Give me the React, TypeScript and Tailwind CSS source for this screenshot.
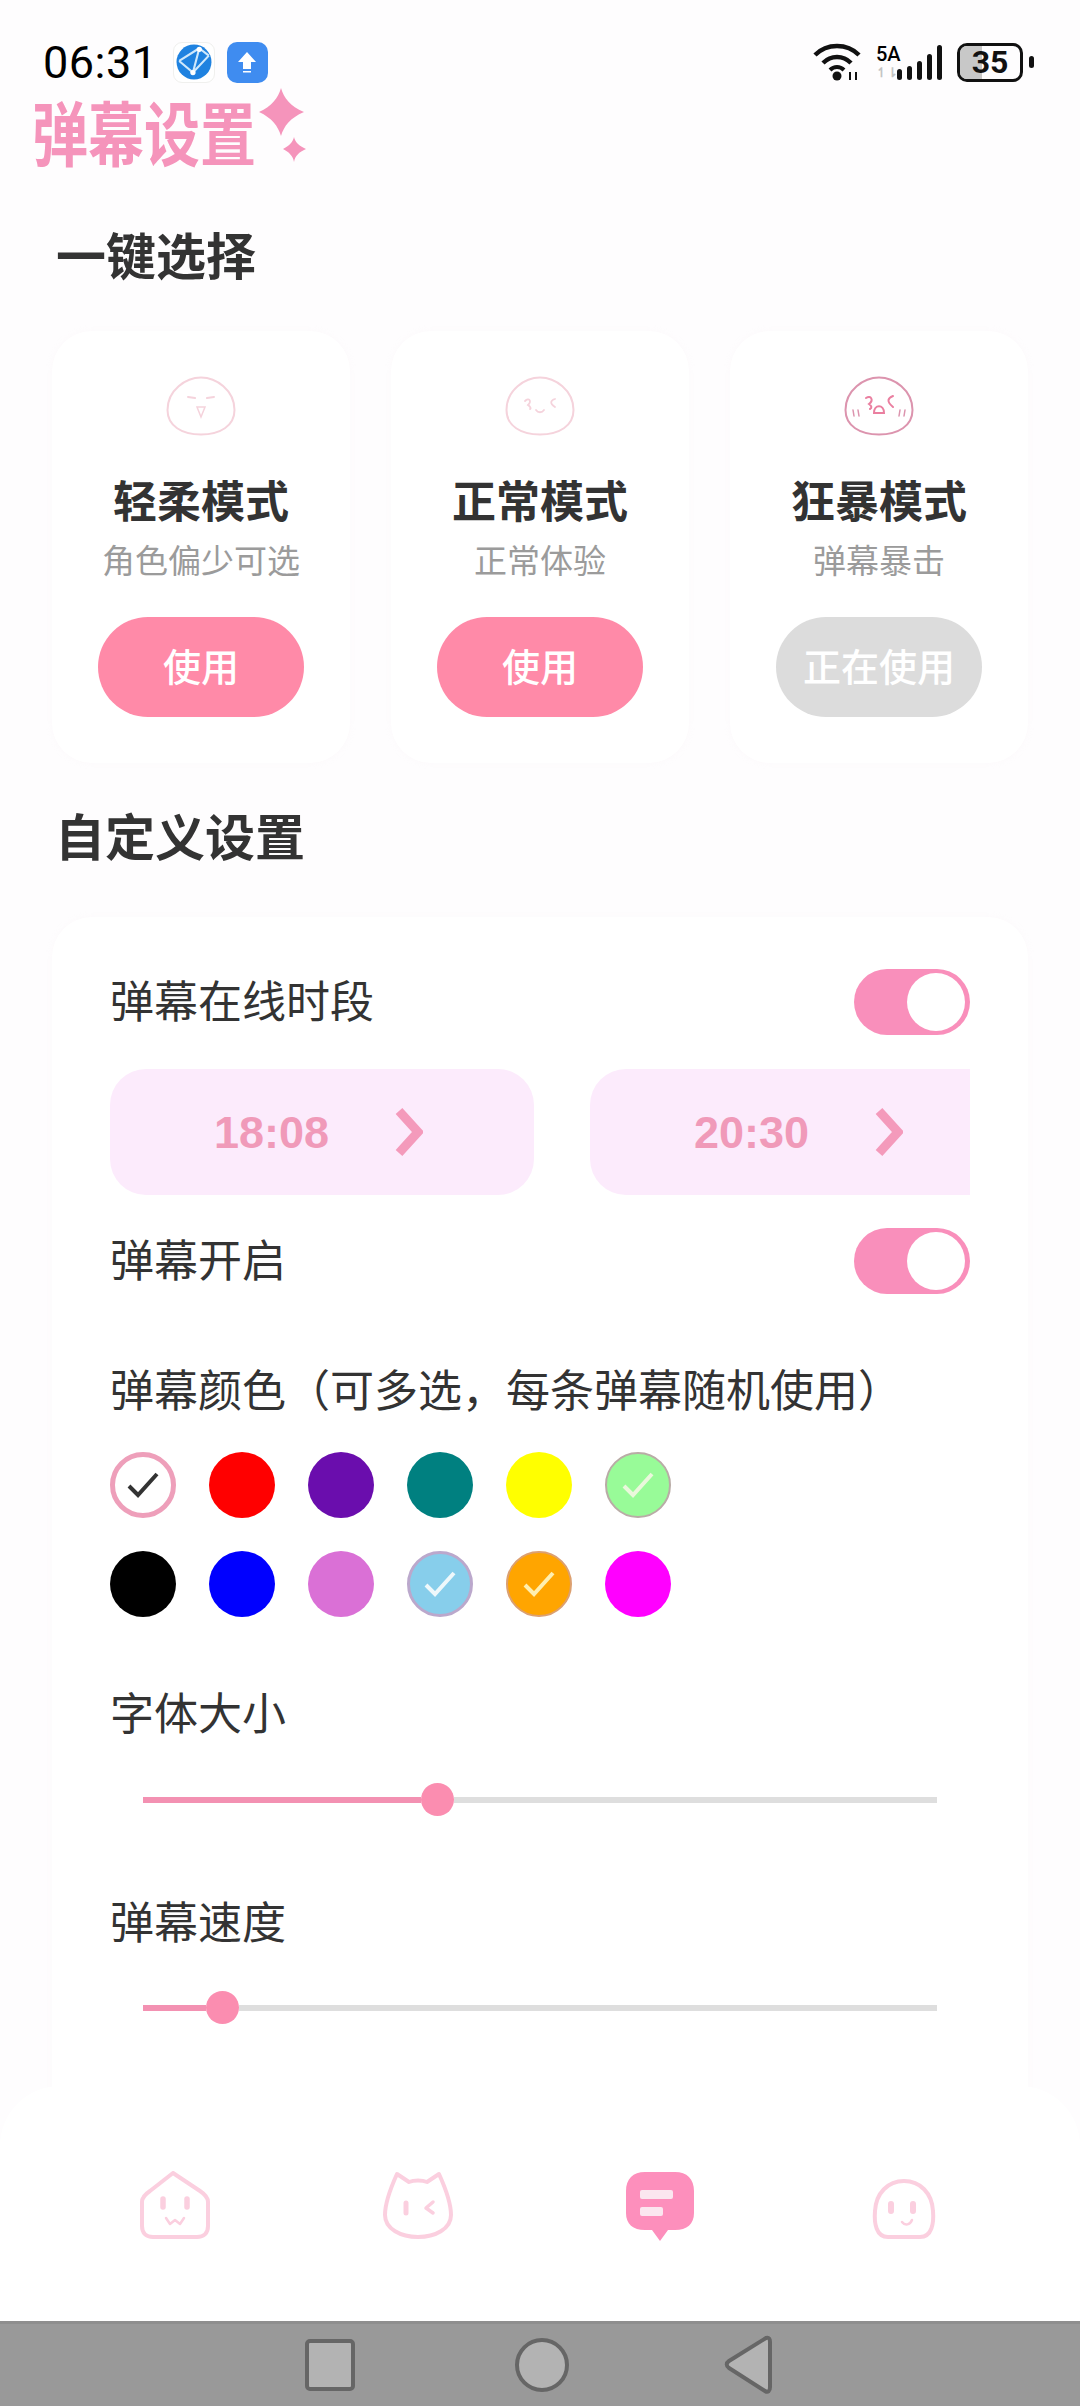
import React from 'react';

const CJK = "font-['Noto_Sans_CJK_SC',sans-serif]";

function Toggle() {
  return (
    <div className="w-[116px] h-[66px] rounded-full bg-[#f98fbb] flex items-center justify-end pr-[5px] shrink-0">
      <div className="w-[58px] h-[58px] rounded-full bg-white" />
    </div>
  );
}

function Chevron() {
  return (
    <svg width="28" height="50" viewBox="0 0 28 50" fill="none">
      <path d="M4 4 L23 25 L4 46" stroke="#f49abb" strokeWidth="9" strokeLinejoin="miter" />
    </svg>
  );
}

function TimeBox({ time }: { time: string }) {
  return (
    <div className="w-[424px] h-[126px] shrink-0 rounded-[36px] bg-[#fcebfc] flex items-center pl-[104px] gap-[66px]">
      <span className="font-['Liberation_Sans',sans-serif] font-bold text-[45px] leading-none text-[#f09ab9]">{time}</span>
      <Chevron />
    </div>
  );
}

function Face({ stroke, children }: { stroke: string; children: React.ReactNode }) {
  return (
    <svg width="70" height="60" viewBox="0 0 70 60" fill="none" stroke={stroke} strokeWidth="2" strokeLinecap="round">
      <path d="M35 1.5C50 1.5 68.5 14 68.5 34C68.5 50 54 58.5 35 58.5C16 58.5 1.5 50 1.5 34C1.5 14 20 1.5 35 1.5Z" />
      {children}
    </svg>
  );
}

function ModeCard({ title, sub, btn, off, face }: { title: string; sub: string; btn: string; off?: boolean; face: React.ReactNode }) {
  return (
    <div className="h-[432px] rounded-[40px] bg-white shadow-[0_0_6px_rgba(240,225,235,0.15)] flex flex-col items-center pt-[45px]">
      {face}
      <div className="mt-[35px] text-[44px] leading-[56px] font-bold text-[#333333]">{title}</div>
      <div className="mt-[10px] text-[33px] leading-[44px] text-[#9b9b9b]">{sub}</div>
      <div className={off
        ? "mt-[36px] w-[206px] h-[100px] pb-[6px] rounded-[50px] bg-[#dcdcdc] flex items-center justify-center text-[38px] font-medium text-white"
        : "mt-[36px] w-[206px] h-[100px] pb-[6px] rounded-[50px] bg-[#ff8aa8] flex items-center justify-center text-[38px] font-medium text-white"}>
        {btn}
      </div>
    </div>
  );
}

function Tick({ color }: { color: string }) {
  return (
    <svg width="34" height="30" viewBox="0 0 34 30" fill="none">
      <path d="M3 16 L12 25 L31 4" stroke={color} strokeWidth="4" />
    </svg>
  );
}

const swatches: { bg: string; tick?: string }[] = [
  { bg: 'bg-white border-[5px] border-[#ee9fba]', tick: '#333333' },
  { bg: 'bg-[#ff0000]' },
  { bg: 'bg-[#6a0dad]' },
  { bg: 'bg-[#008080]' },
  { bg: 'bg-[#ffff00]' },
  { bg: 'bg-[#98fb98] border-2 border-[#b9aca6]', tick: '#eaf8dc' },
  { bg: 'bg-black' },
  { bg: 'bg-[#0000ff]' },
  { bg: 'bg-[#da70d6]' },
  { bg: 'bg-[#87ceeb] border-[3px] border-[#bba8cc]', tick: '#eef8fb' },
  { bg: 'bg-[#ffa500] border-2 border-[#dca070]', tick: '#ffefb0' },
  { bg: 'bg-[#ff00ff]' },
];

function Slider({ fillClass }: { fillClass: string }) {
  return (
    <div className="ml-[31px] mr-[33px] h-[33px] flex items-center">
      <div className={fillClass} />
      <div className="w-[33px] h-[33px] rounded-full bg-[#fb8db0] shrink-0" />
      <div className="flex-1 h-[6px] bg-[#dedede]" />
    </div>
  );
}

function StatusBar() {
  return (
    <div className="h-[42px] mt-[41px] ml-[43px] mr-[46px] flex items-center shrink-0">
      <span className="font-['Roboto',sans-serif] text-[45px] leading-none text-black tracking-[0.5px]">06:31</span>
      <div className="ml-[15px] w-[42px] h-[41px] rounded-[9px] bg-white border border-[#f0f0ee] flex items-center justify-center">
        <svg width="36" height="36" viewBox="0 0 34 34">
          <circle cx="17" cy="17" r="16.5" fill="#1f82e0" />
          <path d="M3 16 L22 4 M3 16 L16 27 L31 11 M22 4 L31 11 M22 4 L16 27" stroke="#cfe8fb" strokeWidth="2" fill="none" />
          <circle cx="22" cy="5" r="2.5" fill="#fff" />
          <circle cx="16" cy="27" r="2.5" fill="#fff" />
        </svg>
      </div>
      <div className="ml-[12px] w-[41px] h-[41px] rounded-[10px] bg-[#3f8cf0] flex items-center justify-center">
        <svg width="20" height="24" viewBox="0 0 20 24" fill="#ffffff">
          <path d="M10 2 L19 12 L14 12 L14 19 L6 19 L6 12 L1 12 Z" />
          <rect x="6" y="21" width="8" height="1.5" />
        </svg>
      </div>
      <div className="ml-auto flex items-center">
        <svg width="50" height="38" viewBox="0 0 50 38" fill="none" stroke="#111" strokeWidth="4.5">
          <path d="M2 12C14 0 34 0 46 12" />
          <path d="M10 20C18 12 30 12 38 20" />
          <path d="M17 27C21 23 27 23 31 27" strokeWidth="4" />
          <circle cx="24" cy="33" r="4.5" fill="#111" stroke="none" />
          <path d="M37 37V29M43 37V29" strokeWidth="2" />
        </svg>
        <div className="ml-[13px] w-[26px] flex flex-col items-start">
          <span className="font-['Roboto',sans-serif] font-medium text-[20px] leading-[20px] text-black">5A</span>
          <span className="font-['Roboto',sans-serif] text-[13px] leading-[14px] text-[#c4c4c4] font-bold mt-[2px]">↿⇂</span>
        </div>
        <div className="flex items-end gap-[5px] h-[36px] -ml-[5px]">
          <div className="w-[5px] h-[11px] rounded-full bg-[#111]" />
          <div className="w-[5px] h-[14px] rounded-full bg-[#111]" />
          <div className="w-[5px] h-[19px] rounded-full bg-[#111]" />
          <div className="w-[5px] h-[26px] rounded-full bg-[#111]" />
          <div className="w-[5px] h-[35px] rounded-full bg-[#111]" />
        </div>
        <div className="ml-[15px] w-[66px] h-[39px] rounded-[10px] border-[3px] border-[#111] overflow-hidden flex relative">
          <div className="w-[22px] h-full bg-[#c8c8c8]" />
          <span className="absolute inset-0 flex items-center justify-center font-['Roboto',sans-serif] font-bold text-[32px] leading-none text-[#111]">35</span>
        </div>
        <div className="ml-[6px] w-[5px] h-[12px] rounded-full bg-[#111]" />
      </div>
    </div>
  );
}

function NavBar() {
  return (
    <div className="relative z-10 -mt-[40px] shrink-0">
      <div className="h-[235px] rounded-t-[60px] bg-white grid grid-cols-4 px-[54px] pt-[85px] justify-items-center items-start">
        <svg className="-ml-[2px]" width="70" height="68" viewBox="0 0 70 68" fill="none" stroke="#fbcfdf" strokeWidth="4" strokeLinejoin="round" strokeLinecap="round">
          <path d="M33 2 L60 20 C66 24 68 27 68 31 L68 55 C68 62 64 66 57 66 L13 66 C6 66 2 62 2 55 L2 31 C2 27 4 24 10 20 Z" />
          <path d="M23 28V36M47 28V36" strokeWidth="5.5" />
          <path d="M26 47 L30 53 L35 49 L40 53 L44 47" strokeWidth="2.5" />
        </svg>
        <svg className="-ml-[2px]" width="70" height="68" viewBox="0 0 70 68" fill="none" stroke="#fbcfdf" strokeWidth="4" strokeLinejoin="round" strokeLinecap="round">
          <path d="M14 3 L26 11 C31 9 39 9 44 11 L56 3 C61 14 68 32 68 44 C68 58 52 66 35 66 C18 66 2 58 2 44 C2 32 9 14 14 3Z" />
          <path d="M23 32V42" strokeWidth="5" />
          <path d="M50 31 L43 37 L50 42" strokeWidth="3.5" />
        </svg>
        <svg className="-ml-[3px]" width="70" height="70" viewBox="0 0 70 70">
          <path d="M20 1 H50 C62 1 69 8 69 20 V42 C69 53 62 59 50 59 H43 L35 70 L27 59 H20 C8 59 1 53 1 42 V20 C1 8 8 1 20 1Z" fill="#fd8fbc" />
          <rect x="15" y="19" width="33" height="9" rx="2" fill="#fbe6ef" />
          <rect x="15" y="36" width="23" height="9" rx="2" fill="#fbe6ef" />
        </svg>
        <svg className="mt-[8px] -ml-[2px]" width="64" height="60" viewBox="0 0 64 60" fill="none" stroke="#fbcfdf" strokeWidth="4" strokeLinecap="round">
          <path d="M32 2C48 2 60 14 61 32C62 44 60 58 48 58H16C4 58 2 44 3 32C4 14 16 2 32 2Z" />
          <path d="M19 25V32M41 25V32" strokeWidth="6" />
          <path d="M30 43C33 47 38 46 40 41" strokeWidth="2.5" />
        </svg>
      </div>
      <div className="h-[85px] bg-[#999999] border-t-[3px] border-[#8e8e8e] flex items-center">
        <div className="ml-[305px] w-[50px] h-[52px] rounded-[5px] bg-[#b3b3b3] border-[4px] border-[#666666]" />
        <div className="ml-[160px] w-[54px] h-[54px] rounded-full bg-[#b3b3b3] border-[4px] border-[#666666]" />
        <svg className="ml-[155px]" width="48" height="60" viewBox="0 0 48 60">
          <path d="M42 3 C45 2 46 4 46 7 L46 52 C46 56 44 58 41 56 L5 33 C2 31 2 28 5 26 Z" fill="#b3b3b3" stroke="#666666" strokeWidth="4" strokeLinejoin="round" />
        </svg>
      </div>
    </div>
  );
}

export default function App() {
  return (
    <div className={`w-[1080px] h-[2406px] overflow-hidden flex flex-col bg-[#fefdfe] ${CJK}`}>
      <div className="flex-1 min-h-0 overflow-hidden">
        <StatusBar />

        {/* page title */}
        <div className="mt-[13px] ml-[32px] h-[70px] flex items-center">
          <span className="text-[56px] leading-[52px] font-bold text-[#f594bb] scale-y-[1.25]">弹幕设置</span>
          <svg className="-mt-[12px] ml-[3px]" width="48" height="74" viewBox="0 0 48 74" fill="#f594bb">
            <path d="M22 0 C25 10 31 18 45 24 C31 30 25 38 22 48 C19 38 13 30 0 24 C13 18 19 10 22 0Z" />
            <path d="M35 49 C36 54 40 58 47 61 C40 64 36 68 35 74 C34 68 30 64 24 61 C30 58 34 54 35 49Z" />
          </svg>
        </div>

        <div className="mt-[57px] ml-[56px] text-[50px] leading-[60px] font-bold text-[#333333]">一键选择</div>

        <div className="mt-[48px] mx-[52px] grid grid-cols-3 gap-[41px]">
          <ModeCard
            title="轻柔模式"
            sub="角色偏少可选"
            btn="使用"
            face={
              <Face stroke="#f5d3dc">
                <path d="M22 21 L29 22M41 22 L48 21" strokeWidth="2" />
                <path d="M31 31 L39 31 L35 41 Z" strokeWidth="1.5" />
              </Face>
            }
          />
          <ModeCard
            title="正常模式"
            sub="正常体验"
            btn="使用"
            face={
              <Face stroke="#f5d3dc">
                <path d="M20 25 C24 21 27 25 23 29 C26 31 26 33 25 33M50 23 C46 24 44 27 50 31" strokeWidth="1.8" />
                <path d="M31 34 C33 37 37 37 39 34" strokeWidth="1.8" />
              </Face>
            }
          />
          <ModeCard
            title="狂暴模式"
            sub="弹幕暴击"
            btn="正在使用"
            off
            face={
              <Face stroke="#dc94ae">
                <path d="M22 22 C27 19 30 24 25 28 C28 30 28 32 26 33M49 20 C44 22 42 25 49 31" strokeWidth="2" stroke="#ea7fa0" />
                <path d="M30 37 C30 28 40 28 40 37 Z" strokeWidth="2" stroke="#ea7fa0" />
                <path d="M9 34 L10 40M14 34 L15 40M56 34 L55 40M61 34 L60 40" strokeWidth="1.5" />
              </Face>
            }
          />
        </div>

        <div className="mt-[41px] ml-[55px] text-[50px] leading-[60px] font-bold text-[#333333]">自定义设置</div>

        {/* custom settings */}
        <div className="mt-[53px] mx-[52px] rounded-t-[40px] bg-white shadow-[0_0_6px_rgba(240,225,235,0.15)] pt-[52px] pl-[60px] pr-[58px] h-[1300px]">
          <div className="h-[66px] flex items-center justify-between">
            <span className="pb-[6px] -ml-[2px] text-[44px] leading-none text-[#333333]">弹幕在线时段</span>
            <Toggle />
          </div>

          <div className="mt-[34px] -ml-[2px] flex gap-[56px] overflow-hidden">
            <TimeBox time="18:08" />
            <TimeBox time="20:30" />
          </div>

          <div className="mt-[33px] h-[66px] flex items-center justify-between">
            <span className="pb-[6px] -ml-[2px] text-[44px] leading-none text-[#333333]">弹幕开启</span>
            <Toggle />
          </div>

          <div className="mt-[66px] -ml-[2px] text-[44px] leading-[56px] text-[#333333] whitespace-nowrap">弹幕颜色（可多选，每条弹幕随机使用）</div>

          <div className="mt-[36px] -ml-[2px] grid grid-cols-[repeat(6,66px)] gap-[33px]">
            {swatches.map((s, i) => (
              <div key={i} className={`w-[66px] h-[66px] rounded-full flex items-center justify-center ${s.bg}`}>
                {s.tick && <Tick color={s.tick} />}
              </div>
            ))}
          </div>

          <div className="mt-[66px] -ml-[2px] text-[44px] leading-[56px] text-[#333333]">字体大小</div>
          <div className="mt-[44px]">
            <Slider fillClass="w-[278px] h-[6px] bg-[#f391b2] shrink-0" />
          </div>

          <div className="mt-[76px] -ml-[2px] text-[44px] leading-[56px] text-[#333333]">弹幕速度</div>
          <div className="mt-[43px]">
            <Slider fillClass="w-[63px] h-[6px] bg-[#f391b2] shrink-0" />
          </div>
        </div>
      </div>

      <NavBar />
    </div>
  );
}
